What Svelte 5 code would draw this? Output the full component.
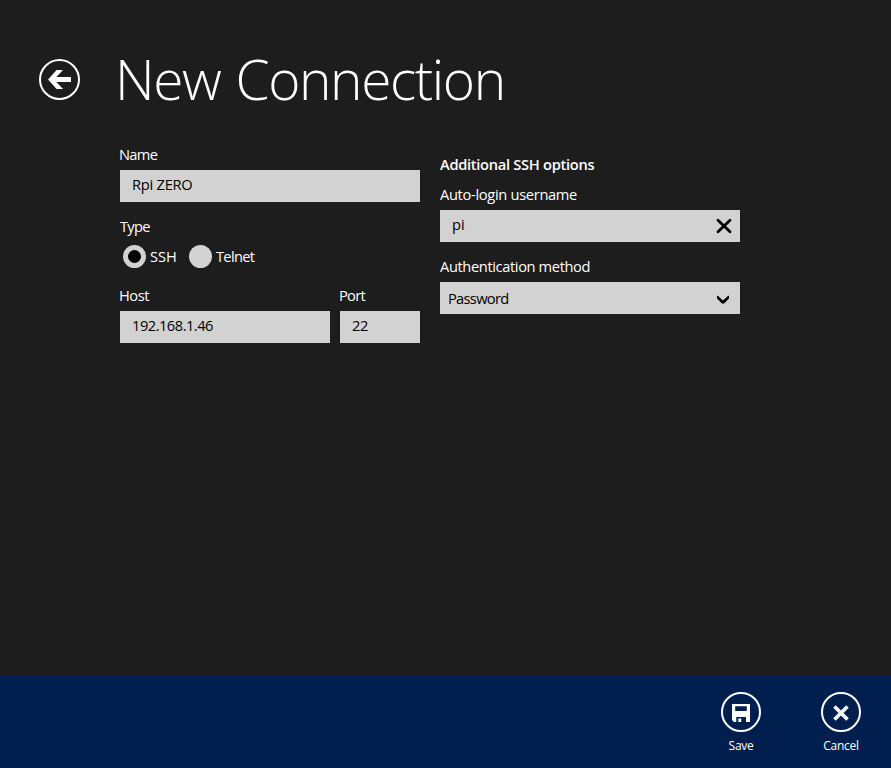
<script>
  let name = $state('Rpi ZERO');
  let host = $state('192.168.1.46');
  let port = $state('22');
  let username = $state('pi');
  let type = $state('SSH');
</script>

<div class="page">
  <header>
    <button class="back" aria-label="Back">
      <svg width="41" height="41" viewBox="0 0 41 41">
        <circle cx="20.5" cy="20.5" r="19.5" fill="none" stroke="#fff" stroke-width="2" />
        <path d="M9 20.5 17.6 11h6.4l-6.6 7H32v5H17.4l6.6 7h-6.4z" fill="#fff" />
      </svg>
    </button>
    <h1>New Connection</h1>
  </header>

  <main>
    <section class="general">
      <label class="field">
        <span class="caption name">Name</span>
        <input class="box title" bind:value={name} />
      </label>
      <div class="type">
        <span class="caption short">Type</span>
        <div class="radios">
          <button class="option" onclick={() => (type = 'SSH')}>
            <i class="radio" class:checked={type === 'SSH'}></i><span class="ssh">SSH</span>
          </button>
          <button class="option" onclick={() => (type = 'Telnet')}>
            <i class="radio" class:checked={type === 'Telnet'}></i><span class="telnet">Telnet</span>
          </button>
        </div>
      </div>
      <div class="address">
        <label class="field host">
          <span class="caption hostname">Host</span>
          <input class="box ip" bind:value={host} />
        </label>
        <label class="field port">
          <span class="caption portname">Port</span>
          <input class="box number" bind:value={port} />
        </label>
      </div>
    </section>

    <section class="ssh-options">
      <h2>Additional SSH options</h2>
      <label class="field">
        <span class="caption">Auto-login username</span>
        <span class="box with-clear">
          <input bind:value={username} />
          <svg class="clear" width="16" height="16" viewBox="0 0 16 16">
            <path d="M2 2.2 14 13.8M14 2.2 2 13.8" stroke="#000" stroke-width="2.8" stroke-linecap="round" />
          </svg>
        </span>
      </label>
      <div class="field auth">
        <span class="caption method">Authentication method</span>
        <button class="box select">
          <span>Password</span>
          <svg width="14" height="10" viewBox="0 0 14 10">
            <path d="M1 .8v2.8L6 8.6h2l5-5V.8h-.8L7 5.6 1.8.8z" fill="#000" />
          </svg>
        </button>
      </div>
    </section>
  </main>

  <footer>
    <button class="command">
      <svg width="40" height="40" viewBox="0 0 40 40">
        <circle cx="20" cy="20" r="19" fill="none" stroke="#fff" stroke-width="2" />
        <path fill="#fff" fill-rule="evenodd" d="M11 12h18v18h-4v-5H15.3v5H13l-2-2zM14.2 14.2V19h11.6v-4.8zM17.3 26.5h3V30h-3z" />
      </svg>
      <span>Save</span>
    </button>
    <button class="command">
      <svg width="40" height="40" viewBox="0 0 40 40">
        <circle cx="20" cy="20" r="19" fill="none" stroke="#fff" stroke-width="2" />
        <path d="M13.5 14.5 26.5 27.5M26.5 14.5 13.5 27.5" stroke="#fff" stroke-width="3.6" />
      </svg>
      <span>Cancel</span>
    </button>
  </footer>
</div>

<style>
  :global(body) {
    background: #1d1d1d;
  }
  .page {
    height: 768px;
    display: flex;
    flex-direction: column;
    background: #1d1d1d;
    color: #fff;
    font: 14.67px/20px 'Open Sans', 'Noto Sans', sans-serif;
    overflow: hidden;
  }
  button,
  input {
    margin: 0;
    padding: 0;
    border: 0;
    border-radius: 0;
    outline: 0;
    background: none;
    color: inherit;
    font: inherit;
  }
  svg {
    display: block;
    flex: none;
  }
  header {
    display: flex;
    align-items: flex-start;
    padding: 41px 0 0 39px;
    height: 76px;
  }
  .back {
    margin-top: 18px;
  }
  h1 {
    margin: 0 0 0 35px;
    font-size: 55px;
    line-height: 76px;
    font-weight: 300;
    letter-spacing: -1.38px;
    word-spacing: 2px;
    white-space: nowrap;
  }
  main {
    flex: 1;
    display: flex;
    align-items: flex-start;
    gap: 20px;
    padding: 27px 0 0 120px;
  }
  section {
    width: 300px;
  }
  .ssh-options {
    padding-top: 10px;
  }
  .field {
    display: flex;
    flex-direction: column;
    gap: 6px;
  }
  .caption {
    letter-spacing: -0.32px;
    white-space: nowrap;
  }
  .method {
    letter-spacing: -0.38px;
  }
  .name,
  .hostname,
  .portname {
    margin-left: -1px;
  }
  .name,
  .short,
  .portname {
    letter-spacing: -0.7px;
  }
  .hostname {
    letter-spacing: -0.45px;
  }
  .box {
    box-sizing: border-box;
    width: 100%;
    height: 32px;
    padding: 4px 12px 8px;
    background: #d2d2d2;
    color: #000;
  }
  .title {
    letter-spacing: -0.25px;
  }
  .ip {
    letter-spacing: -0.5px;
  }
  .number {
    letter-spacing: -0.4px;
  }
  .type {
    margin-top: 14px;
  }
  .short {
    display: block;
  }
  .radios {
    display: flex;
    gap: 12px;
    margin: 8px 0 0 3px;
  }
  .option {
    display: flex;
    align-items: center;
    gap: 4px;
    height: 24px;
  }
  .radio {
    box-sizing: border-box;
    width: 23px;
    height: 23px;
    border-radius: 50%;
    background: #d2d2d2;
  }
  .radio.checked {
    border: 5px solid #d2d2d2;
    background: #000;
  }
  .telnet {
    letter-spacing: -0.65px;
  }
  .address {
    display: flex;
    gap: 10px;
    margin-top: 17px;
  }
  .host {
    width: 210px;
  }
  .port {
    width: 80px;
  }
  h2 {
    margin: 0 0 10px;
    font-size: 14.67px;
    line-height: 20px;
    font-weight: 600;
    letter-spacing: -0.3px;
  }
  .with-clear {
    display: flex;
    padding-right: 8px;
  }
  .with-clear input {
    flex: 1;
    min-width: 0;
    height: 20px;
  }
  .clear {
    margin-top: 4px;
  }
  .auth {
    margin-top: 14px;
  }
  .select {
    display: flex;
    justify-content: space-between;
    padding: 6px 10px 6px 8px;
    letter-spacing: -0.7px;
  }
  .select svg {
    margin-top: 7px;
  }
  footer {
    display: flex;
    justify-content: flex-end;
    gap: 20px;
    height: 92px;
    padding-right: 10px;
    background: #001f4e;
  }
  .command {
    width: 80px;
    display: flex;
    flex-direction: column;
    align-items: center;
    padding-top: 16px;
    gap: 4px;
    font-size: 12px;
    letter-spacing: -0.3px;
  }
</style>
